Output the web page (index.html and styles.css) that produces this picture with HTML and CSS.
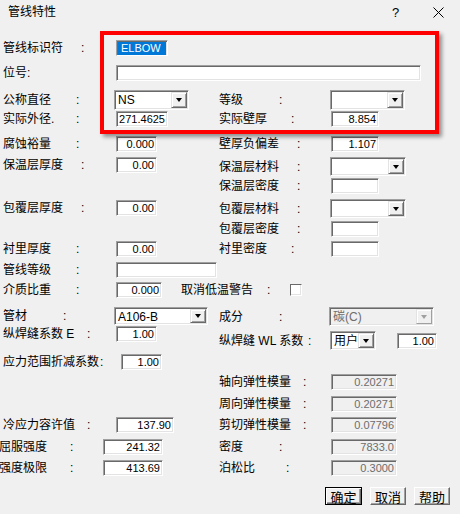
FILE: index.html
```html
<!DOCTYPE html>
<html lang="zh-CN">
<head>
<meta charset="utf-8">
<title>管线特性</title>
<link rel="stylesheet" href="styles.css">
</head>
<body>
<div class="dialog">
  <div class="titlebar">
    <span class="title">管线特性</span>
    <span class="tb-btn">?</span>
    <span class="tb-btn"><svg width="11" height="11" viewBox="0 0 11 11"><path d="M0.5 0.5L10.5 10.5M10.5 0.5L0.5 10.5" stroke="#000" stroke-width="1" fill="none"/></svg></span>
  </div>

  <div class="form">
    <div class="row top g-78-35"><span class="name">管线标识符</span><span class="c">:</span><span class="fld w52 sel"><span class="hl">ELBOW</span></span></div>
    <div class="row top g-113 m7"><span class="name">位号:</span><span class="fld w305"></span></div>

    <div class="cols">
      <div class="col left">
        <div class="row g-73-38"><span class="name">公称直径</span><span class="c">:</span><span class="combo w75"><span class="ct">NS</span><span class="dd"><i class="tri"></i></span></span></div>
        <div class="row g-73-40 m2"><span class="name">实际外径.</span><span class="c">:</span><span class="fld w52">271.4625</span></div>
        <div class="row g-73-40 m7"><span class="name">腐蚀裕量</span><span class="c">:</span><span class="fld w41">0.000</span></div>
        <div class="row g-78-35 m3"><span class="name">保温层厚度</span><span class="c">:</span><span class="fld w41">0.00</span></div>
        <div class="row g-78-35 m25"><span class="name">包覆层厚度</span><span class="c">:</span><span class="fld w41">0.00</span></div>
        <div class="row g-73-40 m23"><span class="name">衬里厚度</span><span class="c">:</span><span class="fld w41">0.00</span></div>
        <div class="row g-73-40 m3"><span class="name">管线等级</span><span class="c">:</span><span class="fld w101"></span></div>
        <div class="row g-medium m2"><span class="name">介质比重</span><span class="c">:</span><span class="fld w46">0.000</span><span></span><span class="name">取消低温警告</span><span class="c">:</span><span class="chk"></span></div>
        <div class="row g-60-51 m8"><span class="name">管材</span><span class="c">:</span><span class="combo w94 h18"><span class="ct">A106-B</span><span class="dd"><i class="tri"></i></span></span></div>
        <div class="row g-84-29"><span class="name">纵焊缝系数 E</span><span class="c">:</span><span class="fld w41">1.00</span></div>
        <div class="row g-97-21 m10"><span class="name">应力范围折减系数</span><span class="c">:</span><span class="fld w41">1.00</span></div>
        <div class="row g-84-29 m45"><span class="name">冷应力容许值</span><span class="c">:</span><span class="fld w58">137.90</span></div>
        <div class="row g-71-33 shift m4"><span class="name">屈服强度</span><span class="c">:</span><span class="fld w60">241.32</span></div>
        <div class="row g-71-33 shift m3"><span class="name">强度极限</span><span class="c">:</span><span class="fld w60">413.69</span></div>
      </div>

      <div class="col right">
        <div class="row g-60-51"><span class="name">等级</span><span class="c">:</span><span class="combo w75"><span class="ct"></span><span class="dd"><i class="tri"></i></span></span></div>
        <div class="row g-72-40 m2"><span class="name">实际壁厚</span><span class="c">:</span><span class="fld w48">8.854</span></div>
        <div class="row g-78-34 m7"><span class="name">壁厚负偏差</span><span class="c">:</span><span class="fld w48">1.107</span></div>
        <div class="row g-78-33 m4"><span class="name">保温层材料</span><span class="c">:</span><span class="combo w76 h19"><span class="ct"></span><span class="dd"><i class="tri"></i></span></span></div>
        <div class="row g-78-34 m2"><span class="name">保温层密度</span><span class="c">:</span><span class="fld w48"></span></div>
        <div class="row g-78-33 m4"><span class="name">包覆层材料</span><span class="c">:</span><span class="combo w76 h19"><span class="ct"></span><span class="dd"><i class="tri"></i></span></span></div>
        <div class="row g-78-34 m3"><span class="name">包覆层密度</span><span class="c">:</span><span class="fld w48"></span></div>
        <div class="row g-72-40 m2"><span class="name">衬里密度</span><span class="c">:</span><span class="fld w48"></span></div>
        <div class="row g-60-50 m49"><span class="name">成分</span><span class="c">:</span><span class="combo w105 h19 off"><span class="ct">碳(C)</span><span class="dd"><i class="tri"></i></span></span></div>
        <div class="row g-wl m6"><span class="name">纵焊缝 WL 系数</span><span class="c">:</span><span class="combo w46 h19"><span class="ct">用户</span><span class="dd"><i class="tri"></i></span></span><span></span><span class="fld w40">1.00</span></div>
        <div class="row g-84-28 m24"><span class="name">轴向弹性模量</span><span class="c">:</span><span class="fld w66 off">0.20271</span></div>
        <div class="row g-84-28 m4"><span class="name">周向弹性模量</span><span class="c">:</span><span class="fld w66 off">0.20271</span></div>
        <div class="row g-84-28 m3"><span class="name">剪切弹性模量</span><span class="c">:</span><span class="fld w66 off">0.07796</span></div>
        <div class="row g-60-52 m4"><span class="name">密度</span><span class="c">:</span><span class="fld w66 off">7833.0</span></div>
        <div class="row g-67-45 m3"><span class="name">泊松比</span><span class="c">:</span><span class="fld w66 off">0.3000</span></div>
      </div>
    </div>

    <div class="footer">
      <span class="btn default">确定</span>
      <span class="btn">取消</span>
      <span class="btn">帮助</span>
    </div>
  </div>

  <div class="annot"></div>
</div>
</body>
</html>
```

FILE: styles.css
```css
* { box-sizing: border-box; }

html, body {
  margin: 0;
  padding: 0;
}

body {
  width: 460px;
  height: 514px;
  overflow: hidden;
  background: #f0f0f0;
  color: #000;
  font-family: "Liberation Sans", "Noto Sans CJK SC", sans-serif;
  font-size: 12px;
}

.dialog {
  position: relative;
  width: 460px;
  height: 514px;
}

/* title bar */
.titlebar {
  display: flex;
  align-items: center;
  height: 24px;
  padding-left: 8px;
  padding-right: 0;
}
.title {
  flex: 1;
  font-size: 12px;
  line-height: 24px;
}
.tb-btn {
  width: 43px;
  height: 24px;
  display: flex;
  align-items: center;
  justify-content: center;
  font-size: 13px;
}

/* form */
.form {
  margin-top: 15px;
}
.row {
  display: grid;
  height: 18px;
  align-items: center;
  white-space: nowrap;
}
.row.top { padding-left: 3px; }
.name, .c { line-height: 18px; }

.cols { display: flex; margin-top: 8px; }
.col { display: flex; flex-direction: column; }
.col.left { width: 219px; padding-left: 3px; }
.col.right { flex: 1; }

.shift { margin-left: -4px; }

/* grid column variants: name | colon | control */
.g-78-35 { grid-template-columns: 78px 35px auto; }
.g-113 { grid-template-columns: 113px auto; }
.g-73-38 { grid-template-columns: 73px 38px auto; }
.g-73-40 { grid-template-columns: 73px 40px auto; }
.g-60-51 { grid-template-columns: 60px 51px auto; }
.g-60-50 { grid-template-columns: 60px 50px auto; }
.g-60-52 { grid-template-columns: 60px 52px auto; }
.g-84-29 { grid-template-columns: 84px 29px auto; }
.g-84-28 { grid-template-columns: 84px 28px auto; }
.g-97-21 { grid-template-columns: 97px 21px auto; }
.g-71-33 { grid-template-columns: 71px 33px auto; }
.g-72-40 { grid-template-columns: 72px 40px auto; }
.g-78-34 { grid-template-columns: 78px 34px auto; }
.g-78-33 { grid-template-columns: 78px 33px auto; }
.g-67-45 { grid-template-columns: 67px 45px auto; }
.g-medium { grid-template-columns: 73px 40px 46px 19px 86px 23px 12px; }
.g-wl { grid-template-columns: 89px 22px 46px 21px 40px; }

/* vertical spacing */
.m2 { margin-top: 2px; }
.m3 { margin-top: 3px; }
.m4 { margin-top: 4px; }
.m6 { margin-top: 6px; }
.m7 { margin-top: 7px; }
.m8 { margin-top: 8px; }
.m10 { margin-top: 10px; }
.m23 { margin-top: 23px; }
.m24 { margin-top: 24px; }
.m25 { margin-top: 25px; }
.m45 { margin-top: 45px; }
.m49 { margin-top: 49px; }

/* sunken edit field */
.fld {
  display: block;
  height: 16px;
  background: #fff;
  border: 1px solid;
  border-color: #a0a0a0 #fff #fff #a0a0a0;
  box-shadow: inset 1px 1px 0 #696969, inset -1px -1px 0 #e3e3e3;
  font-size: 11px;
  line-height: 14px;
  text-align: right;
  padding: 0 2px 0 2px;
  overflow: hidden;
}
.fld.off {
  background: #f0f0f0;
  color: #6d6d6d;
}
.fld.sel {
  text-align: left;
  padding: 1px 1px 1px 1px;
}
.hl {
  display: block;
  height: 13px;
  background: #0078d7;
  color: #fff;
  line-height: 13px;
  padding-left: 3px;
}

.w40 { width: 40px; }
.w41 { width: 41px; }
.w46 { width: 46px; }
.w48 { width: 48px; }
.w52 { width: 52px; }
.w58 { width: 58px; }
.w60 { width: 60px; }
.w66 { width: 66px; }
.w75 { width: 75px; }
.w76 { width: 76px; }
.w94 { width: 94px; }
.w101 { width: 101px; }
.w105 { width: 105px; }
.w305 { width: 305px; }

/* combo box */
.combo {
  display: flex;
  height: 20px;
  padding: 1px;
  background: #fff;
  border: 1px solid;
  border-color: #a0a0a0 #fff #fff #a0a0a0;
  box-shadow: inset 1px 1px 0 #696969, inset -1px -1px 0 #e3e3e3;
}
.combo.h19 { height: 19px; }
.combo.h18 { height: 18px; }
.ct {
  flex: 1;
  padding-left: 2px;
  font-size: 12px;
  line-height: 16px;
  overflow: hidden;
}
.dd {
  width: 16px;
  display: flex;
  align-items: center;
  justify-content: center;
  background: #f0f0f0;
  border: 1px solid;
  border-color: #e3e3e3 #696969 #696969 #e3e3e3;
  box-shadow: inset 1px 1px 0 #fff, inset -1px -1px 0 #a0a0a0;
}
.tri {
  display: block;
  width: 0;
  height: 0;
  border-left: 3.5px solid transparent;
  border-right: 3.5px solid transparent;
  border-top: 4px solid #000;
}
.combo.off { background: #f0f0f0; }
.combo.off .ct { color: #6d6d6d; }
.combo.off .dd {
  border-color: #e3e3e3 #a0a0a0 #a0a0a0 #e3e3e3;
  box-shadow: inset 1px 1px 0 #fff;
}
.combo.off .tri { border-top-color: #a0a0a0; }

/* checkbox */
.chk {
  display: block;
  width: 12px;
  height: 12px;
  background: #fff;
  border: 1px solid;
  border-color: #696969 #fff #fff #696969;
  box-shadow: inset -1px -1px 0 #e3e3e3;
}

/* buttons */
.footer {
  display: flex;
  justify-content: flex-end;
  gap: 8px;
  margin-top: 10px;
  padding-right: 10px;
}
.btn {
  width: 36px;
  height: 18px;
  display: flex;
  align-items: center;
  justify-content: center;
  background: #f0f0f0;
  border: 1px solid;
  border-color: #fff #696969 #696969 #fff;
  box-shadow: inset -1px -1px 0 #a0a0a0;
  font-size: 13px;
}
.btn.default {
  width: 37px;
  border: 1px solid #000;
  box-shadow: inset 1px 1px 0 #fff, inset -1px -1px 0 #696969, inset -2px -2px 0 #a0a0a0;
}

/* annotation overlay */
.annot {
  position: absolute;
  left: 100px;
  top: 31px;
  width: 339px;
  height: 103px;
  border: 4px solid #ff0000;
  box-shadow: 3px 3px 4px rgba(0, 0, 0, 0.4);
  pointer-events: none;
}
```
